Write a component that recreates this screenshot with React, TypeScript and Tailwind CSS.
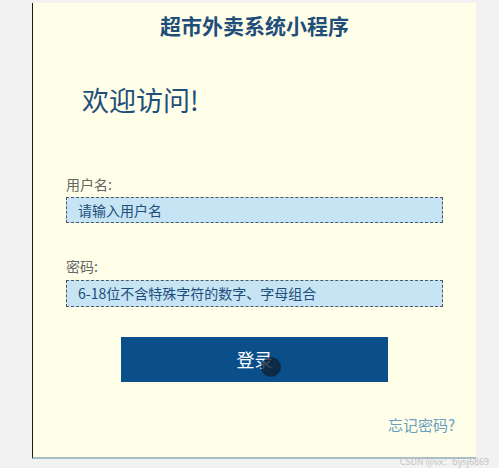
import React from "react";

const font = { fontFamily: '"Noto Sans CJK SC", "Noto Sans", sans-serif' };

export default function App() {
  return (
    <div
      className="relative w-[499px] h-[468px] overflow-hidden bg-[#f2f2f2]"
      style={font}
    >
      <div className="ml-[32px] mt-[3px] w-[444px] h-[456px] bg-[#fffee8] border-l border-l-[#1a1a1a] border-b-2 border-b-[#a9bfc6] flex flex-col pt-[10px]">
        <h1 className="h-[24px] leading-[24px] text-center text-[21px] font-bold text-[#1f4e7a]">
          超市外卖系统小程序
        </h1>

        <div className="mt-[47px] ml-[49px] h-[32px] leading-[32px] text-[27px] text-[#1f4e7a]">
          欢迎访问!
        </div>

        <div className="mt-[58px] px-[33px] flex flex-col">
          <label className="h-[20px] leading-[20px] text-[14px] text-[#666]">用户名:</label>
          <div className="mt-[3px] h-[26px] border border-dashed border-[#4a5866] bg-[#c6e4f3] pl-[11px] flex items-center text-[14px] text-[#1f4e7a]">
            请输入用户名
          </div>

          <label className="mt-[33px] h-[20px] leading-[20px] text-[14px] text-[#666]">密码:</label>
          <div className="mt-[4px] h-[27px] border border-dashed border-[#4a5866] bg-[#c6e4f3] pl-[11px] flex items-center text-[14px] text-[#1f4e7a]">
            6-18位不含特殊字符的数字、字母组合
          </div>
        </div>

        <button className="relative mt-[30px] ml-[88px] w-[267px] h-[45px] bg-[#0b4f8a] text-white text-[18px] flex items-center justify-center">
          登录
          <span className="absolute left-[140px] top-[20px] w-[20px] h-[20px] rounded-full bg-[#0d2236]/80" />
        </button>

        <div className="mt-[33px] pr-[21px] h-[20px] leading-[20px] text-right text-[15px] text-[#6a9ec2]">
          忘记密码?
        </div>
      </div>

      <div className="absolute right-[10px] bottom-[1px] text-[9px] leading-[10px] text-[#c4c4c4]">
        CSDN @vx：bysj6869
      </div>
    </div>
  );
}
